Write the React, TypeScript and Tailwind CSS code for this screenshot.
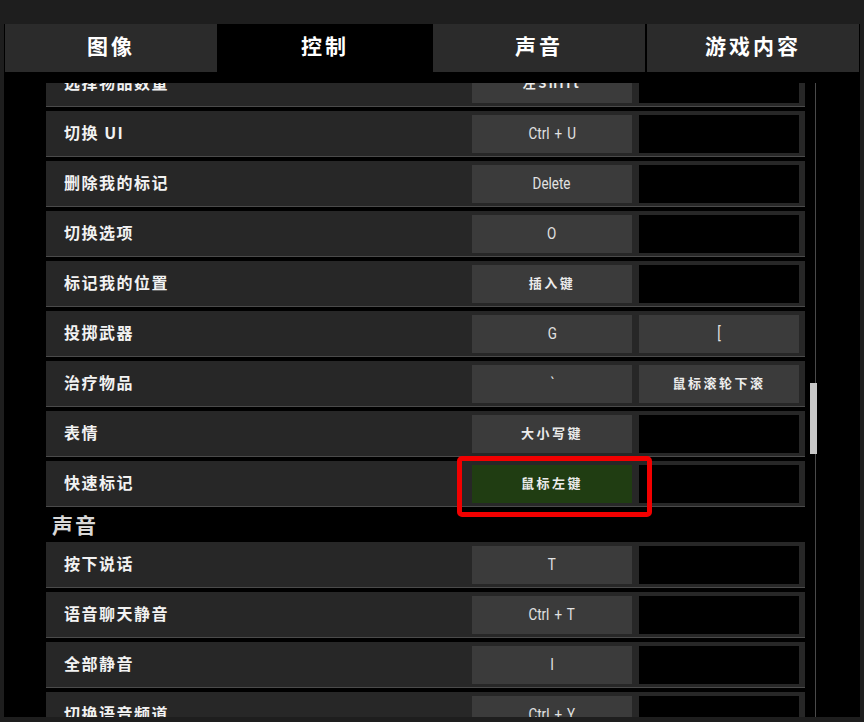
import React from "react";

type KeyKind = "key" | "empty" | "active";

interface Binding {
  label: string;
  keys: [string | null, string | null];
  active?: boolean;
}

const controlRows: Binding[] = [
  { label: "选择物品数量", keys: ["左Shift", null] },
  { label: "切换 UI", keys: ["Ctrl + U", null] },
  { label: "删除我的标记", keys: ["Delete", null] },
  { label: "切换选项", keys: ["O", null] },
  { label: "标记我的位置", keys: ["插入键", null] },
  { label: "投掷武器", keys: ["G", "["] },
  { label: "治疗物品", keys: ["`", "鼠标滚轮下滚"] },
  { label: "表情", keys: ["大小写键", null] },
  { label: "快速标记", keys: ["鼠标左键", null], active: true },
];

const voiceRows: Binding[] = [
  { label: "按下说话", keys: ["T", null] },
  { label: "语音聊天静音", keys: ["Ctrl + T", null] },
  { label: "全部静音", keys: ["I", null] },
  { label: "切换语音频道", keys: ["Ctrl + Y", null] },
];

const tabs = ["图像", "控制", "声音", "游戏内容"];

const isLatin = (s: string) => /^[\x00-\x7f]+$/.test(s);

function KeyCell({ value, kind, first }: { value: string | null; kind: KeyKind; first?: boolean }) {
  const bg =
    kind === "active" ? "bg-[#203d12]" : kind === "key" ? "bg-[#3b3b3b]" : "bg-black";
  return (
    <div
      className={`${first ? "" : "ml-[7px]"} mt-[4px] w-[160px] h-[38px] flex items-center justify-center ${bg}`}
    >
      {value &&
        (isLatin(value) ? (
          <span className="inline-block scale-x-[0.84] font-['Roboto','Noto_Sans_CJK_SC',sans-serif] text-[16px] text-[#e2e2e2] whitespace-pre [word-spacing:2px]">
            {value}
          </span>
        ) : (
          <span className="pb-[3px] font-['Noto_Sans_CJK_SC',sans-serif] text-[13px] font-bold tracking-[2.5px] text-[#ececec]">
            {value}
          </span>
        ))}
    </div>
  );
}

function BindingRow({ row }: { row: Binding }) {
  const [k1, k2] = row.keys;
  return (
    <div className="relative h-[46px] mb-[4px] shrink-0 bg-[#272727] border-b border-[#4b4b4b] flex">
      <div className="w-[426px] h-[45px] flex items-center pl-[18px] pb-[4px] font-['Noto_Sans_CJK_SC',sans-serif] text-[16px] font-bold tracking-[1.5px] text-[#f2f2f2]">
        {row.label}
      </div>
      <KeyCell first value={k1} kind={row.active ? "active" : k1 ? "key" : "empty"} />
      <KeyCell value={k2} kind={k2 ? "key" : "empty"} />
      {row.active && (
        // highlight frame around the selected binding
        <div className="absolute left-[411px] top-[-5px] w-[195px] h-[61px] border-[5px] border-[#f20000] rounded-[5px]" />
      )}
    </div>
  );
}

export default function App() {
  return (
    <div className="w-[864px] h-[722px] bg-[#1e1e1e] pt-[24px] px-[4px] pb-[5px] flex">
      <div className="flex-1 bg-black flex flex-col overflow-hidden">
        <div className="grid grid-cols-4 gap-[2px] px-[1px] h-[48px] shrink-0">
          {tabs.map((t, i) => (
            <div
              key={t}
              className={`flex items-center justify-center pb-[5px] font-['Noto_Sans_CJK_SC',sans-serif] text-[21px] font-bold tracking-[3px] text-white ${
                i === 1 ? "bg-black" : "bg-[#2b2b2b]"
              }`}
            >
              {t}
            </div>
          ))}
        </div>

        <div className="mt-[11px] flex-1 flex pl-[42px] overflow-hidden">
          <div className="w-[759px] flex flex-col overflow-hidden">
            <div className="-mt-[22px] flex flex-col">
              {controlRows.map((r) => (
                <BindingRow key={r.label} row={r} />
              ))}
              <div className="h-[31px] shrink-0 flex items-center pl-[6px] pb-[4px] font-['Noto_Sans_CJK_SC',sans-serif] text-[21px] font-bold tracking-[2px] text-[#d8d8d8]">
                声音
              </div>
              {voiceRows.map((r) => (
                <BindingRow key={r.label} row={r} />
              ))}
            </div>
          </div>

          {/* scrollbar */}
          <div className="relative ml-[5px] w-[7px]">
            <div className="absolute left-[5px] top-0 bottom-0 w-px bg-[#4a4a4a]" />
            <div className="relative mt-[300px] h-[71px] w-[7px] bg-[#c8c8c8]" />
          </div>
        </div>
      </div>
    </div>
  );
}
